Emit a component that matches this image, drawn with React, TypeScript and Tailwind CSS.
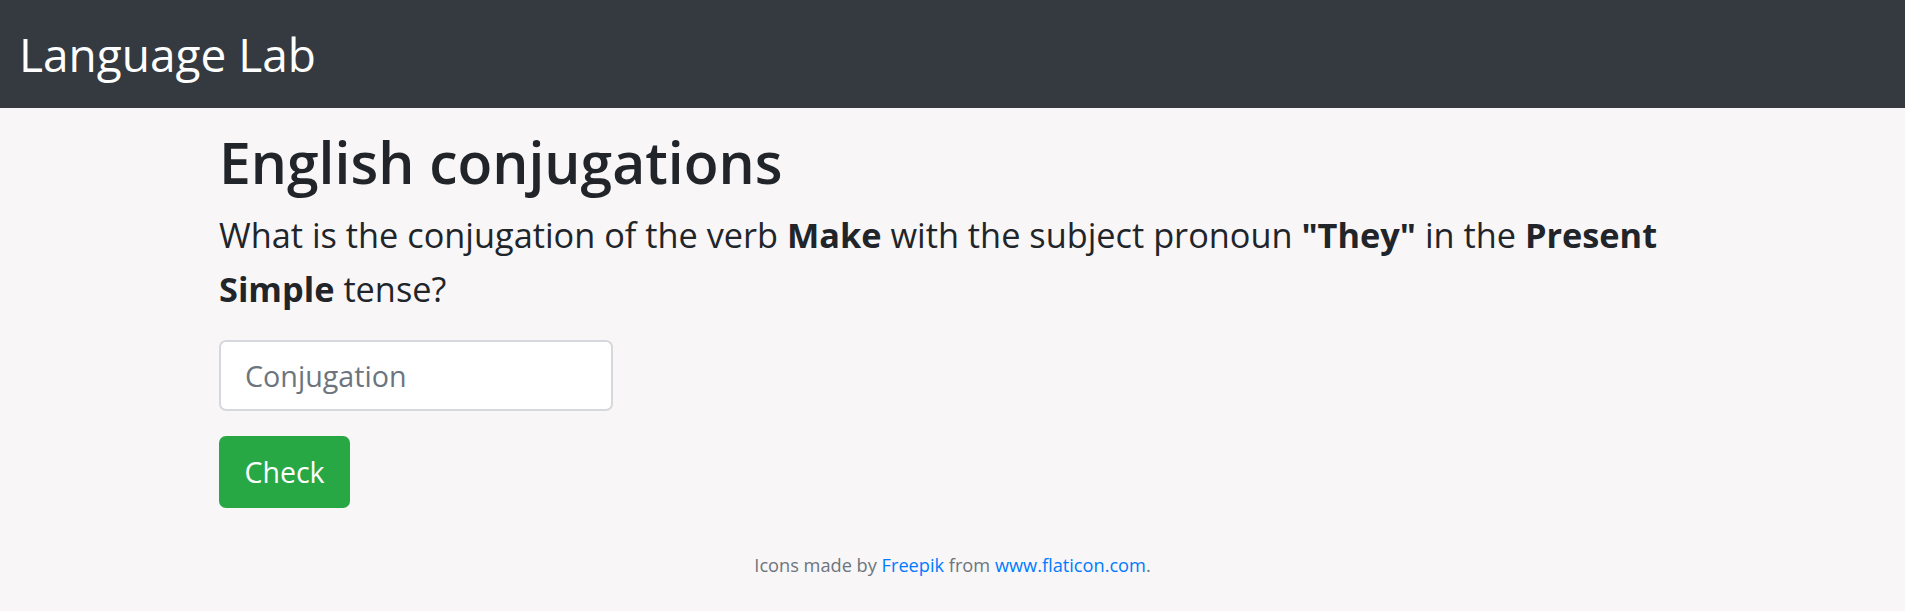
import React, { useState } from 'react';

export default function App() {
    const [answer, setAnswer] = useState('');

    return (
        <div className="min-h-[611px] bg-[#f8f6f7] text-[#212529] font-['Open_Sans',sans-serif]">
            {/* Navbar */}
            <nav className="h-[108px] bg-[#343a40] flex items-center px-[19px]">
                <span className="text-[46px] leading-none text-white">Language Lab</span>
            </nav>

            {/* Exercise */}
            <main className="w-[1467px] mx-auto pt-[18px]">
                <h1 className="text-[57px] leading-[72px] font-semibold">English conjugations</h1>
                <p className="mt-[10px] text-[34.3px] leading-[54px]">
                    <span>What is the conjugation of the verb </span>
                    <b>Make</b>
                    <span> with the subject pronoun </span>
                    <b>"They"</b>
                    <span> in the </span>
                    <b>Present</b>
                    <br />
                    <b>Simple</b>
                    <span> tense?</span>
                </p>

                <input
                    type="text"
                    value={answer}
                    onChange={(e) => setAnswer(e.target.value)}
                    placeholder="Conjugation"
                    className="mt-[24px] block w-[394px] h-[71px] px-[24px] text-[28.7px] bg-white border-2 border-[#d5d8dc] rounded-[7px] placeholder:text-[#6c757d] outline-none"
                />

                <button
                    type="button"
                    className="mt-[25px] block w-[131px] h-[72px] text-[28.5px] text-white bg-[#28a745] rounded-[7px]"
                >
                    Check
                </button>
            </main>

            {/* Footer */}
            <footer className="pt-[44px] text-center text-[18.2px] text-[#6c757d]">
                Icons made by <a href="#" className="text-[#007bff]">Freepik</a> from <a href="#" className="text-[#007bff]">www.flaticon.com</a>.
            </footer>
        </div>
    );
}
